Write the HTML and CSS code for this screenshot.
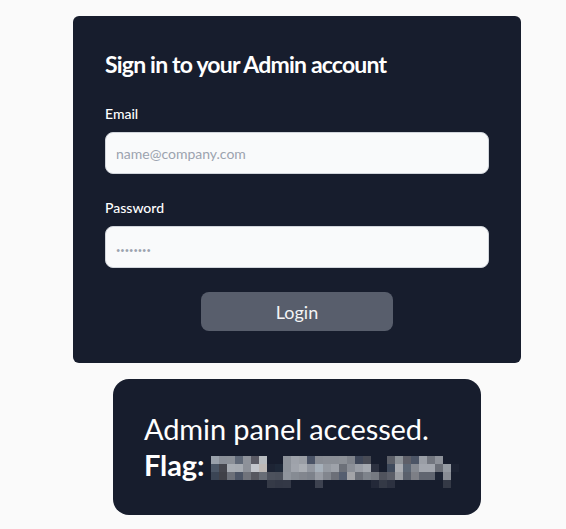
FILE: index.html
```html
<!DOCTYPE html>
<html lang="en">
<head>
<meta charset="utf-8">
<title>Admin Sign In</title>
<link rel="stylesheet" href="styles.css">
</head>
<body>
<main class="page">
  <section class="card">
    <h1 class="title">Sign in to your Admin account</h1>
    <form class="form">
      <div class="field">
        <label class="label" for="email">Email</label>
        <input class="input" id="email" type="email" placeholder="name@company.com">
      </div>
      <div class="field">
        <label class="label" for="password">Password</label>
        <input class="input" id="password" type="password" placeholder="••••••••">
      </div>
      <div class="actions">
        <button class="button" type="button">Login</button>
      </div>
    </form>
  </section>
  <section class="result">
    <p class="result-line">Admin panel accessed.</p>
    <p class="result-line"><strong>Flag:</strong> <svg class="mosaic" width="256" height="32" viewBox="0 0 256 32" aria-label="redacted">
      <g>
        <rect x="0" y="0" width="8" height="8" fill="#9aa1ab"/>
        <rect x="8" y="0" width="8" height="8" fill="#8a8f98"/>
        <rect x="16" y="0" width="8" height="8" fill="#8b9098"/>
        <rect x="24" y="0" width="8" height="8" fill="#5f6877"/>
        <rect x="32" y="0" width="8" height="8" fill="#8e929a"/>
        <rect x="40" y="0" width="8" height="8" fill="#5a5a64"/>
        <rect x="48" y="0" width="8" height="8" fill="#b8bcc0"/>
        <rect x="72" y="0" width="8" height="8" fill="#8d929a"/>
        <rect x="80" y="0" width="8" height="8" fill="#9ea2aa"/>
        <rect x="88" y="0" width="8" height="8" fill="#9a9ea5"/>
        <rect x="96" y="0" width="8" height="8" fill="#4a5366"/>
        <rect x="104" y="0" width="8" height="8" fill="#888c94"/>
        <rect x="112" y="0" width="8" height="8" fill="#8a8e96"/>
        <rect x="120" y="0" width="8" height="8" fill="#8a8e96"/>
        <rect x="128" y="0" width="8" height="8" fill="#8c9097"/>
        <rect x="136" y="0" width="8" height="8" fill="#7f838b"/>
        <rect x="144" y="0" width="8" height="8" fill="#3e4658"/>
        <rect x="152" y="0" width="8" height="8" fill="#484b55"/>
        <rect x="176" y="0" width="8" height="8" fill="#5c5f68"/>
        <rect x="184" y="0" width="8" height="8" fill="#8d9298"/>
        <rect x="192" y="0" width="8" height="8" fill="#5e5f68"/>
        <rect x="200" y="0" width="8" height="8" fill="#4c5566"/>
        <rect x="208" y="0" width="8" height="8" fill="#9a9ea6"/>
        <rect x="216" y="0" width="8" height="8" fill="#72767f"/>
        <rect x="224" y="0" width="8" height="8" fill="#8e929a"/>
      </g>
      <g>
        <rect x="0" y="8" width="8" height="8" fill="#4c5767"/>
        <rect x="8" y="8" width="8" height="8" fill="#45464e"/>
        <rect x="16" y="8" width="8" height="8" fill="#a8adb4"/>
        <rect x="24" y="8" width="8" height="8" fill="#a6abb2"/>
        <rect x="32" y="8" width="8" height="8" fill="#8d9199"/>
        <rect x="40" y="8" width="8" height="8" fill="#c3c6cc"/>
        <rect x="48" y="8" width="8" height="8" fill="#beb9b6"/>
        <rect x="56" y="8" width="8" height="8" fill="#1d2434"/>
        <rect x="64" y="8" width="8" height="8" fill="#1e2838"/>
        <rect x="72" y="8" width="8" height="8" fill="#8d929a"/>
        <rect x="80" y="8" width="8" height="8" fill="#a0a4ac"/>
        <rect x="88" y="8" width="8" height="8" fill="#aaaeb4"/>
        <rect x="96" y="8" width="8" height="8" fill="#9297a0"/>
        <rect x="104" y="8" width="8" height="8" fill="#a6b0ba"/>
        <rect x="112" y="8" width="8" height="8" fill="#959aa2"/>
        <rect x="120" y="8" width="8" height="8" fill="#9ea2aa"/>
        <rect x="128" y="8" width="8" height="8" fill="#6c7079"/>
        <rect x="136" y="8" width="8" height="8" fill="#8b8f97"/>
        <rect x="144" y="8" width="8" height="8" fill="#9a9ea6"/>
        <rect x="152" y="8" width="8" height="8" fill="#a5a9b0"/>
        <rect x="160" y="8" width="8" height="8" fill="#2c3140"/>
        <rect x="176" y="8" width="8" height="8" fill="#3f4a5c"/>
        <rect x="184" y="8" width="8" height="8" fill="#a9acb2"/>
        <rect x="192" y="8" width="8" height="8" fill="#5d6775"/>
        <rect x="200" y="8" width="8" height="8" fill="#868a92"/>
        <rect x="208" y="8" width="8" height="8" fill="#a2a6ae"/>
        <rect x="216" y="8" width="8" height="8" fill="#a2a6ae"/>
        <rect x="224" y="8" width="8" height="8" fill="#6b6f78"/>
        <rect x="232" y="8" width="8" height="8" fill="#959aa2"/>
        <rect x="240" y="8" width="8" height="8" fill="#1c2232"/>
      </g>
      <g>
        <rect x="0" y="16" width="8" height="8" fill="#3b4555"/>
        <rect x="8" y="16" width="8" height="8" fill="#404148"/>
        <rect x="16" y="16" width="8" height="8" fill="#6c7079"/>
        <rect x="24" y="16" width="8" height="8" fill="#4c5566"/>
        <rect x="32" y="16" width="8" height="8" fill="#70737b"/>
        <rect x="40" y="16" width="8" height="8" fill="#575860"/>
        <rect x="48" y="16" width="8" height="8" fill="#686d76"/>
        <rect x="56" y="16" width="8" height="8" fill="#4d525d"/>
        <rect x="64" y="16" width="8" height="8" fill="#4b505b"/>
        <rect x="72" y="16" width="8" height="8" fill="#8f949c"/>
        <rect x="80" y="16" width="8" height="8" fill="#868b93"/>
        <rect x="88" y="16" width="8" height="8" fill="#82868e"/>
        <rect x="96" y="16" width="8" height="8" fill="#7d828b"/>
        <rect x="104" y="16" width="8" height="8" fill="#989ca4"/>
        <rect x="112" y="16" width="8" height="8" fill="#82868e"/>
        <rect x="120" y="16" width="8" height="8" fill="#6c6f78"/>
        <rect x="128" y="16" width="8" height="8" fill="#555e70"/>
        <rect x="136" y="16" width="8" height="8" fill="#a3a4a8"/>
        <rect x="144" y="16" width="8" height="8" fill="#6b6f78"/>
        <rect x="152" y="16" width="8" height="8" fill="#7e838b"/>
        <rect x="160" y="16" width="8" height="8" fill="#767a82"/>
        <rect x="168" y="16" width="8" height="8" fill="#50535d"/>
        <rect x="176" y="16" width="8" height="8" fill="#5b5e68"/>
        <rect x="184" y="16" width="8" height="8" fill="#999ca2"/>
        <rect x="192" y="16" width="8" height="8" fill="#5a606c"/>
        <rect x="200" y="16" width="8" height="8" fill="#7d7f86"/>
        <rect x="208" y="16" width="8" height="8" fill="#606570"/>
        <rect x="216" y="16" width="8" height="8" fill="#606570"/>
        <rect x="224" y="16" width="8" height="8" fill="#1d2434"/>
        <rect x="232" y="16" width="8" height="8" fill="#888c94"/>
      </g>
      <g>
        <rect x="56" y="24" width="8" height="8" fill="#353a47"/>
        <rect x="64" y="24" width="8" height="8" fill="#323745"/>
        <rect x="72" y="24" width="8" height="8" fill="#333846"/>
        <rect x="104" y="24" width="8" height="8" fill="#3d4250"/>
        <rect x="160" y="24" width="8" height="8" fill="#232838"/>
        <rect x="168" y="24" width="8" height="8" fill="#343946"/>
        <rect x="176" y="24" width="8" height="8" fill="#2c3140"/>
        <rect x="232" y="24" width="8" height="8" fill="#343946"/>
      </g>
    </svg></p>
  </section>
</main>
</body>
</html>
```

FILE: styles.css
```css
* { box-sizing: border-box; }

html, body {
  margin: 0;
  padding: 0;
  background: #fafafa;
  font-family: "Lato", "Noto Sans", "Liberation Sans", sans-serif;
}

.page {
  display: flex;
  flex-direction: column;
  align-items: center;
  padding: 16px 0 0 28px;
}

.card {
  width: 448px;
  background: #171d2d;
  border-radius: 6px;
  padding: 32px;
}

.title {
  margin: 0;
  font-size: 23px;
  line-height: 32px;
  font-weight: 700;
  letter-spacing: -0.8px;
  color: #ffffff;
}

.form {
  margin-top: 24px;
  display: flex;
  flex-direction: column;
  gap: 24px;
}

.field {
  display: flex;
  flex-direction: column;
  gap: 8px;
}

.label {
  font-size: 14px;
  line-height: 20px;
  font-weight: 500;
  color: #ffffff;
}

.input {
  display: block;
  width: 100%;
  height: 42px;
  padding: 10px;
  border: 1px solid #d1d5db;
  border-radius: 8px;
  background: #f9fafb;
  font-family: inherit;
  font-size: 14px;
  color: #111827;
  outline: none;
}

.input::placeholder {
  color: #9ca3af;
}

#password::placeholder {
  font-size: 7.5px;
  letter-spacing: 0;
}

.actions {
  display: flex;
  justify-content: center;
}

.button {
  width: 192px;
  height: 39px;
  border: none;
  border-radius: 8px;
  background: #585e6c;
  color: #f3f4f6;
  font-family: inherit;
  font-size: 18px;
  line-height: 28px;
}

.result {
  width: 368px;
  margin-top: 16px;
  background: #171d2d;
  border-radius: 16px;
  padding: 32px 31px;
  color: #ffffff;
}

.result-line {
  margin: 0;
  font-size: 29px;
  line-height: 36px;
  letter-spacing: -0.1px;
  white-space: nowrap;
}

.result-line strong {
  font-weight: 700;
}

.mosaic {
  display: inline-block;
  vertical-align: -6px;
  margin: 0 0 -6px -1px;
}
```
